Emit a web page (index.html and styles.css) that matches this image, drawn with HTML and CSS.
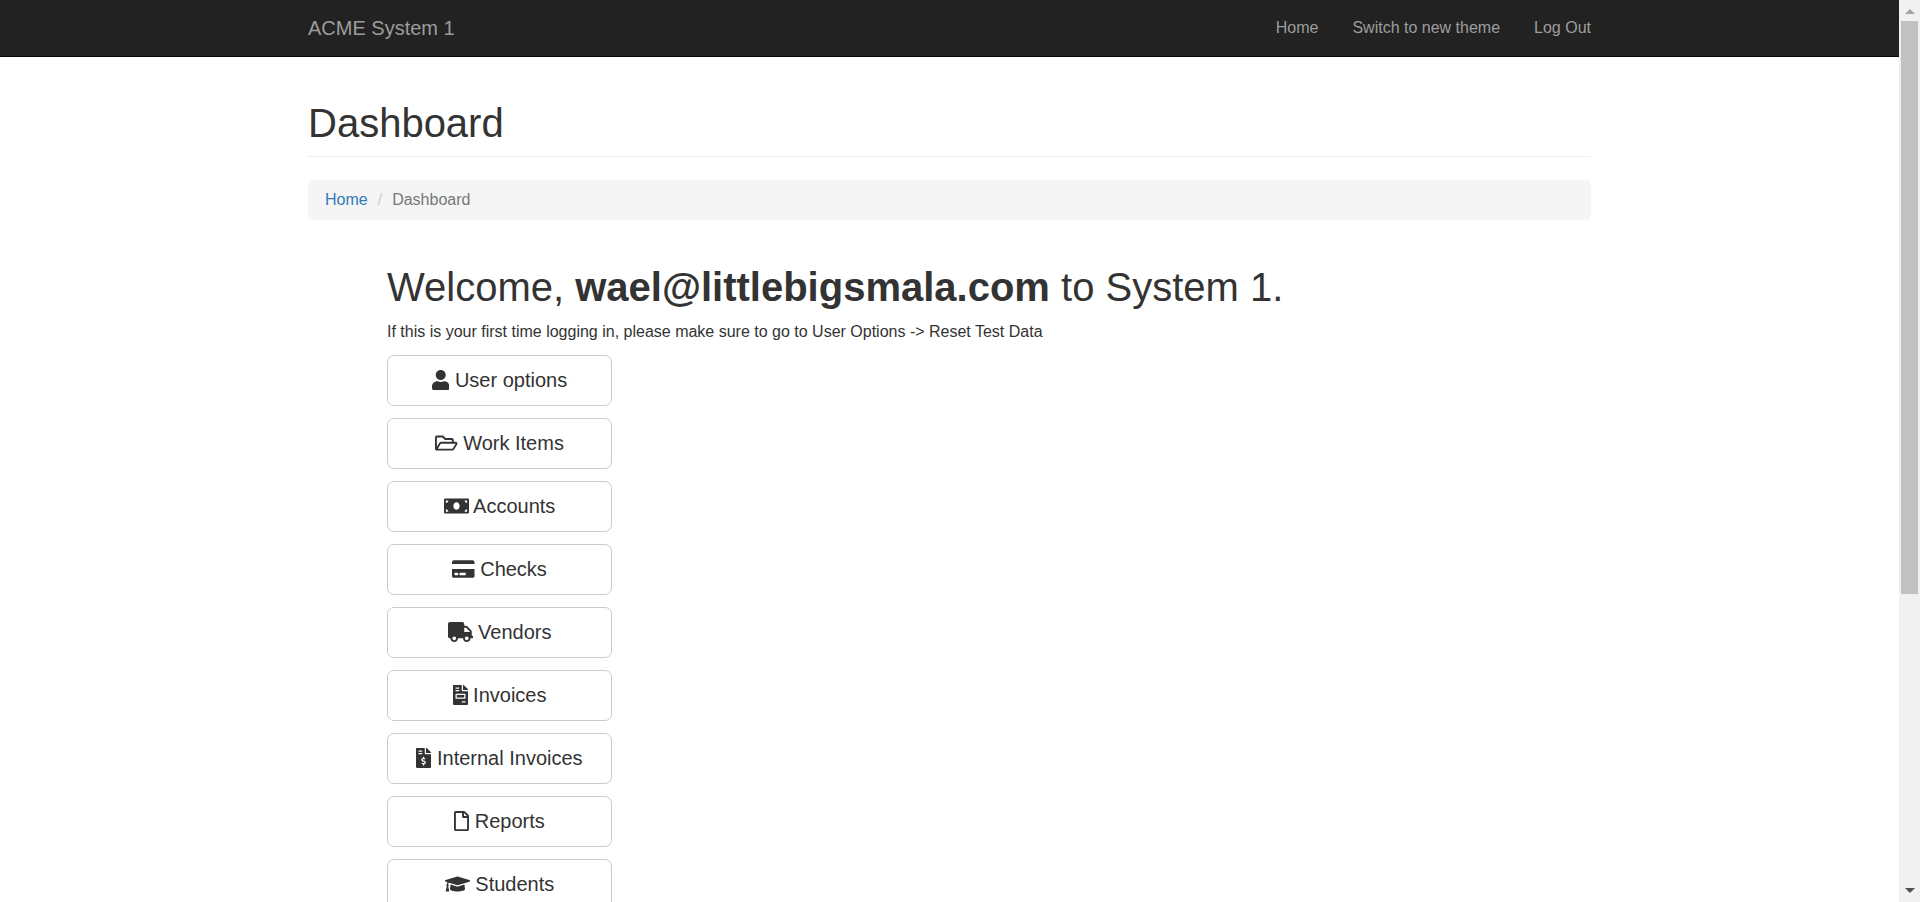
FILE: index.html
```html
<!DOCTYPE html>
<html lang="en">
<head>
<meta charset="utf-8">
<title>ACME System 1 - Dashboard</title>
<link rel="stylesheet" href="styles.css">
</head>
<body>
<div class="page">
  <nav class="navbar">
    <div class="container navbar-inner">
      <a class="brand" href="#">ACME System 1</a>
      <ul class="nav-links">
        <li><a href="#">Home</a></li>
        <li><a href="#">Switch to new theme</a></li>
        <li><a href="#">Log Out</a></li>
      </ul>
    </div>
  </nav>
  <main class="container">
    <h1 class="page-header">Dashboard</h1>
    <ol class="breadcrumb">
      <li><a href="#">Home</a></li>
      <li class="active">Dashboard</li>
    </ol>
    <section class="welcome">
      <h1>Welcome, <strong>wael@littlebigsmala.com</strong> to System 1.</h1>
      <p>If this is your first time logging in, please make sure to go to User Options -&gt; Reset Test Data</p>
      <div class="actions">
        <button class="btn" type="button"><svg class="icon" viewBox="0 0 448 512"><path d="M224 256c70.7 0 128-57.3 128-128S294.7 0 224 0 96 57.3 96 128s57.3 128 128 128zm89.6 32h-16.7c-22.2 10.2-46.9 16-72.9 16s-50.6-5.8-72.9-16h-16.7C60.2 288 0 348.2 0 422.4V464c0 26.5 21.5 48 48 48h352c26.5 0 48-21.5 48-48v-41.6c0-74.2-60.2-134.4-134.4-134.4z"/></svg> User options</button>
        <button class="btn" type="button"><svg class="icon" viewBox="0 0 576 512"><path d="M527.9 224H480v-48c0-26.5-21.5-48-48-48H272l-64-64H48C21.5 64 0 85.5 0 112v288c0 26.5 21.5 48 48 48h400c16.5 0 31.9-8.5 40.7-22.6l79.9-128c20-31.9-3-73.4-40.7-73.4zM48 118c0-3.3 2.7-6 6-6h134.1l64 64H426c3.3 0 6 2.7 6 6v42H152c-16.8 0-32.4 8.8-41.1 23.2L48 351.4zm400 282H72l77.2-128H528z"/></svg> Work Items</button>
        <button class="btn" type="button"><svg class="icon" viewBox="0 0 640 512"><path d="M608 64H32C14.33 64 0 78.33 0 96v320c0 17.67 14.33 32 32 32h576c17.67 0 32-14.33 32-32V96c0-17.67-14.33-32-32-32zM48 400v-64c35.35 0 64 28.65 64 64H48zm0-224v-64h64c0 35.35-28.65 64-64 64zm272 176c-44.19 0-80-42.99-80-96 0-53.02 35.82-96 80-96s80 42.98 80 96c0 53.03-35.83 96-80 96zm272 48h-64c0-35.35 28.65-64 64-64v64zm0-224c-35.35 0-64-28.65-64-64h64v64z"/></svg> Accounts</button>
        <button class="btn" type="button"><svg class="icon" viewBox="0 0 576 512"><path d="M0 432c0 26.5 21.5 48 48 48h480c26.5 0 48-21.5 48-48V256H0v176zm192-68c0-6.6 5.4-12 12-12h136c6.6 0 12 5.4 12 12v40c0 6.6-5.4 12-12 12H204c-6.6 0-12-5.4-12-12v-40zm-128 0c0-6.6 5.4-12 12-12h72c6.6 0 12 5.4 12 12v40c0 6.6-5.4 12-12 12H76c-6.6 0-12-5.4-12-12v-40zM576 80v48H0V80c0-26.5 21.5-48 48-48h480c26.5 0 48 21.5 48 48z"/></svg> Checks</button>
        <button class="btn" type="button"><svg class="icon" viewBox="0 0 640 512"><path d="M624 352h-16V243.9c0-12.7-5.1-24.9-14.1-33.9L494 110.1c-9-9-21.2-14.1-33.9-14.1H416V48c0-26.5-21.5-48-48-48H48C21.5 0 0 21.5 0 48v320c0 26.5 21.5 48 48 48h16c0 53 43 96 96 96s96-43 96-96h128c0 53 43 96 96 96s96-43 96-96h48c8.8 0 16-7.2 16-16v-32c0-8.8-7.2-16-16-16zM160 464c-26.5 0-48-21.5-48-48s21.5-48 48-48 48 21.5 48 48-21.5 48-48 48zm320 0c-26.5 0-48-21.5-48-48s21.5-48 48-48 48 21.5 48 48-21.5 48-48 48zm80-208H416V144h44.1l99.9 99.9V256z"/></svg> Vendors</button>
        <button class="btn" type="button"><svg class="icon" viewBox="0 0 384 512"><path d="M288 256H96v64h192v-64zm89-151L279.1 7c-4.5-4.5-10.6-7-17-7H256v128h128v-6.1c0-6.3-2.5-12.4-7-16.9zm-153 31V0H24C10.7 0 0 10.7 0 24v464c0 13.3 10.7 24 24 24h336c13.3 0 24-10.7 24-24V160H248c-13.2 0-24-10.8-24-24zM64 72c0-4.42 3.58-8 8-8h80c4.42 0 8 3.58 8 8v16c0 4.42-3.58 8-8 8H72c-4.42 0-8-3.58-8-8V72zm0 64c0-4.42 3.58-8 8-8h80c4.42 0 8 3.58 8 8v16c0 4.42-3.58 8-8 8H72c-4.42 0-8-3.58-8-8v-16zm256 304c0 4.42-3.58 8-8 8h-80c-4.42 0-8-3.58-8-8v-16c0-4.42 3.58-8 8-8h80c4.42 0 8 3.58 8 8v16zm0-200v96c0 8.84-7.16 16-16 16H80c-8.84 0-16-7.16-16-16v-96c0-8.84 7.16-16 16-16h224c8.84 0 16 7.16 16 16z"/></svg> Invoices</button>
        <button class="btn" type="button"><svg class="icon" viewBox="0 0 384 512"><path d="M377 105L279.1 7c-4.5-4.5-10.6-7-17-7H256v128h128v-6.1c0-6.3-2.5-12.4-7-16.9zm-153 31V0H24C10.7 0 0 10.7 0 24v464c0 13.3 10.7 24 24 24h336c13.3 0 24-10.7 24-24V160H248c-13.2 0-24-10.8-24-24zM64 72c0-4.42 3.58-8 8-8h80c4.42 0 8 3.58 8 8v16c0 4.42-3.58 8-8 8H72c-4.42 0-8-3.58-8-8V72zm0 64c0-4.42 3.58-8 8-8h80c4.42 0 8 3.58 8 8v16c0 4.42-3.58 8-8 8H72c-4.42 0-8-3.58-8-8v-16zM208 415.88V440c0 4.42-3.58 8-8 8h-16c-4.42 0-8-3.58-8-8v-24.29c-11.29-.58-22.27-4.52-31.37-11.35-3.9-2.93-4.1-8.77-.57-12.14l11.75-11.21c2.77-2.64 6.89-2.76 10.13-.73 3.87 2.42 8.26 3.72 12.82 3.72h28.11c6.5 0 11.8-5.92 11.8-13.19 0-5.95-3.61-11.19-8.77-12.73l-45-13.5c-18.59-5.58-31.58-23.42-31.58-43.39 0-24.52 19.05-44.44 42.67-45.07V232c0-4.42 3.58-8 8-8h16c4.42 0 8 3.58 8 8v24.29c11.29.58 22.27 4.51 31.37 11.35 3.9 2.93 4.1 8.77.57 12.14l-11.75 11.21c-2.77 2.64-6.89 2.76-10.13.73-3.87-2.43-8.26-3.72-12.82-3.72h-28.11c-6.5 0-11.8 5.92-11.8 13.19 0 5.95 3.61 11.19 8.77 12.73l45 13.5c18.59 5.58 31.58 23.42 31.58 43.39 0 24.53-19.05 44.44-42.67 45.07z"/></svg> Internal Invoices</button>
        <button class="btn" type="button"><svg class="icon" viewBox="0 0 384 512"><path d="M369.9 97.9L286 14C277 5 264.8-.1 252.1-.1H48C21.5 0 0 21.5 0 48v416c0 26.5 21.5 48 48 48h288c26.5 0 48-21.5 48-48V131.9c0-12.7-5.1-25-14.1-34zM332.1 128H256V51.9l76.1 76.1zM48 464V48h160v104c0 13.3 10.7 24 24 24h104v288H48z"/></svg> Reports</button>
        <button class="btn" type="button"><svg class="icon" viewBox="0 0 640 512"><path d="M622.34 153.2L343.4 67.5c-15.2-4.67-31.6-4.67-46.79 0L17.66 153.2c-23.54 7.23-23.54 38.36 0 45.59l48.63 14.94c-10.67 13.19-17.23 29.28-17.88 46.9C38.78 266.15 32 276.11 32 288c0 10.78 5.68 19.85 13.86 25.65L20.33 428.53C18.11 438.52 25.71 448 35.94 448h56.11c10.24 0 17.84-9.48 15.62-19.47L82.14 313.65C90.32 307.85 96 298.78 96 288c0-11.57-6.47-21.25-15.66-26.87.76-15.02 8.44-28.3 20.69-36.72L296.6 284.5c9.06 2.78 26.44 6.25 46.79 0l278.95-85.7c23.55-7.24 23.55-38.36 0-45.6zM352.79 315.09c-28.53 8.76-52.84 3.92-65.59 0l-145.02-44.55L128 384c0 35.35 85.96 64 192 64s192-28.65 192-64l-14.18-113.47-145.03 44.56z"/></svg> Students</button>
      </div>
    </section>
  </main>
</div>
<div class="scrollbar" aria-hidden="true">
  <svg class="arrow arrow-up" viewBox="0 0 10 5"><path d="M0 5L5 0l5 5z"/></svg>
  <div class="track"><div class="thumb"></div></div>
  <svg class="arrow arrow-down" viewBox="0 0 10 5"><path d="M0 0h10L5 5z"/></svg>
</div>
</body>
</html>
```

FILE: styles.css
```css
* {
  box-sizing: border-box;
}

body {
  display: grid;
  grid-template-columns: 1fr 21px;
  height: 100vh;
  margin: 0;
  overflow: hidden;
  background: #fff;
  color: #333;
  font-family: "Liberation Sans", Arial, sans-serif;
  font-size: 16px;
  line-height: 22px;
}

a {
  color: #337ab7;
  text-decoration: none;
}

h1 {
  margin: 0;
  font-size: 40px;
  font-weight: 400;
  line-height: 44px;
}

.page {
  height: 100vh;
  overflow: hidden;
}

.container {
  max-width: 1283px;
  margin: 0 auto;
}

.navbar {
  background: #222;
  border-bottom: 1px solid #080808;
}

.navbar-inner {
  display: flex;
  align-items: center;
  justify-content: space-between;
  min-height: 56px;
}

.navbar a {
  color: #9d9d9d;
}

.brand {
  font-size: 20px;
}

.nav-links {
  display: flex;
  gap: 34px;
  margin: 0;
  padding: 0;
  list-style: none;
}

.page-header {
  margin: 44px 0 23px;
  padding-bottom: 11px;
  border-bottom: 1px solid #eee;
}

.breadcrumb {
  display: flex;
  margin: 0;
  padding: 9px 17px;
  border-radius: 5px;
  background: #f5f5f5;
  list-style: none;
}

.breadcrumb .active {
  color: #777;
}

.breadcrumb .active::before {
  content: "/";
  padding: 0 10px;
  color: #ccc;
}

.welcome {
  padding: 45px 79px 0;
}

.welcome p {
  margin: 12px 0;
}

.actions {
  display: flex;
  flex-direction: column;
  align-items: flex-start;
  gap: 12px;
}

.btn {
  width: 225px;
  padding: 11px 18px;
  border: 1px solid #ccc;
  border-radius: 7px;
  background: #fff;
  color: #333;
  font: inherit;
  font-size: 20px;
  line-height: 27px;
  white-space: nowrap;
}

.icon {
  height: 20px;
  fill: currentColor;
  vertical-align: -3px;
}

.scrollbar {
  display: flex;
  flex-direction: column;
  align-items: center;
  height: 100vh;
  background: #f1f1f1;
}

.arrow {
  width: 10px;
  height: 5px;
}

.arrow-up {
  margin: 9px 0 7px;
  fill: #a3a3a3;
}

.arrow-down {
  margin: 7px 0 9px;
  fill: #505050;
}

.track {
  flex: 1;
  width: 17px;
}

.thumb {
  height: calc(100% * 2 / 3);
  background: #c1c1c1;
}
```
